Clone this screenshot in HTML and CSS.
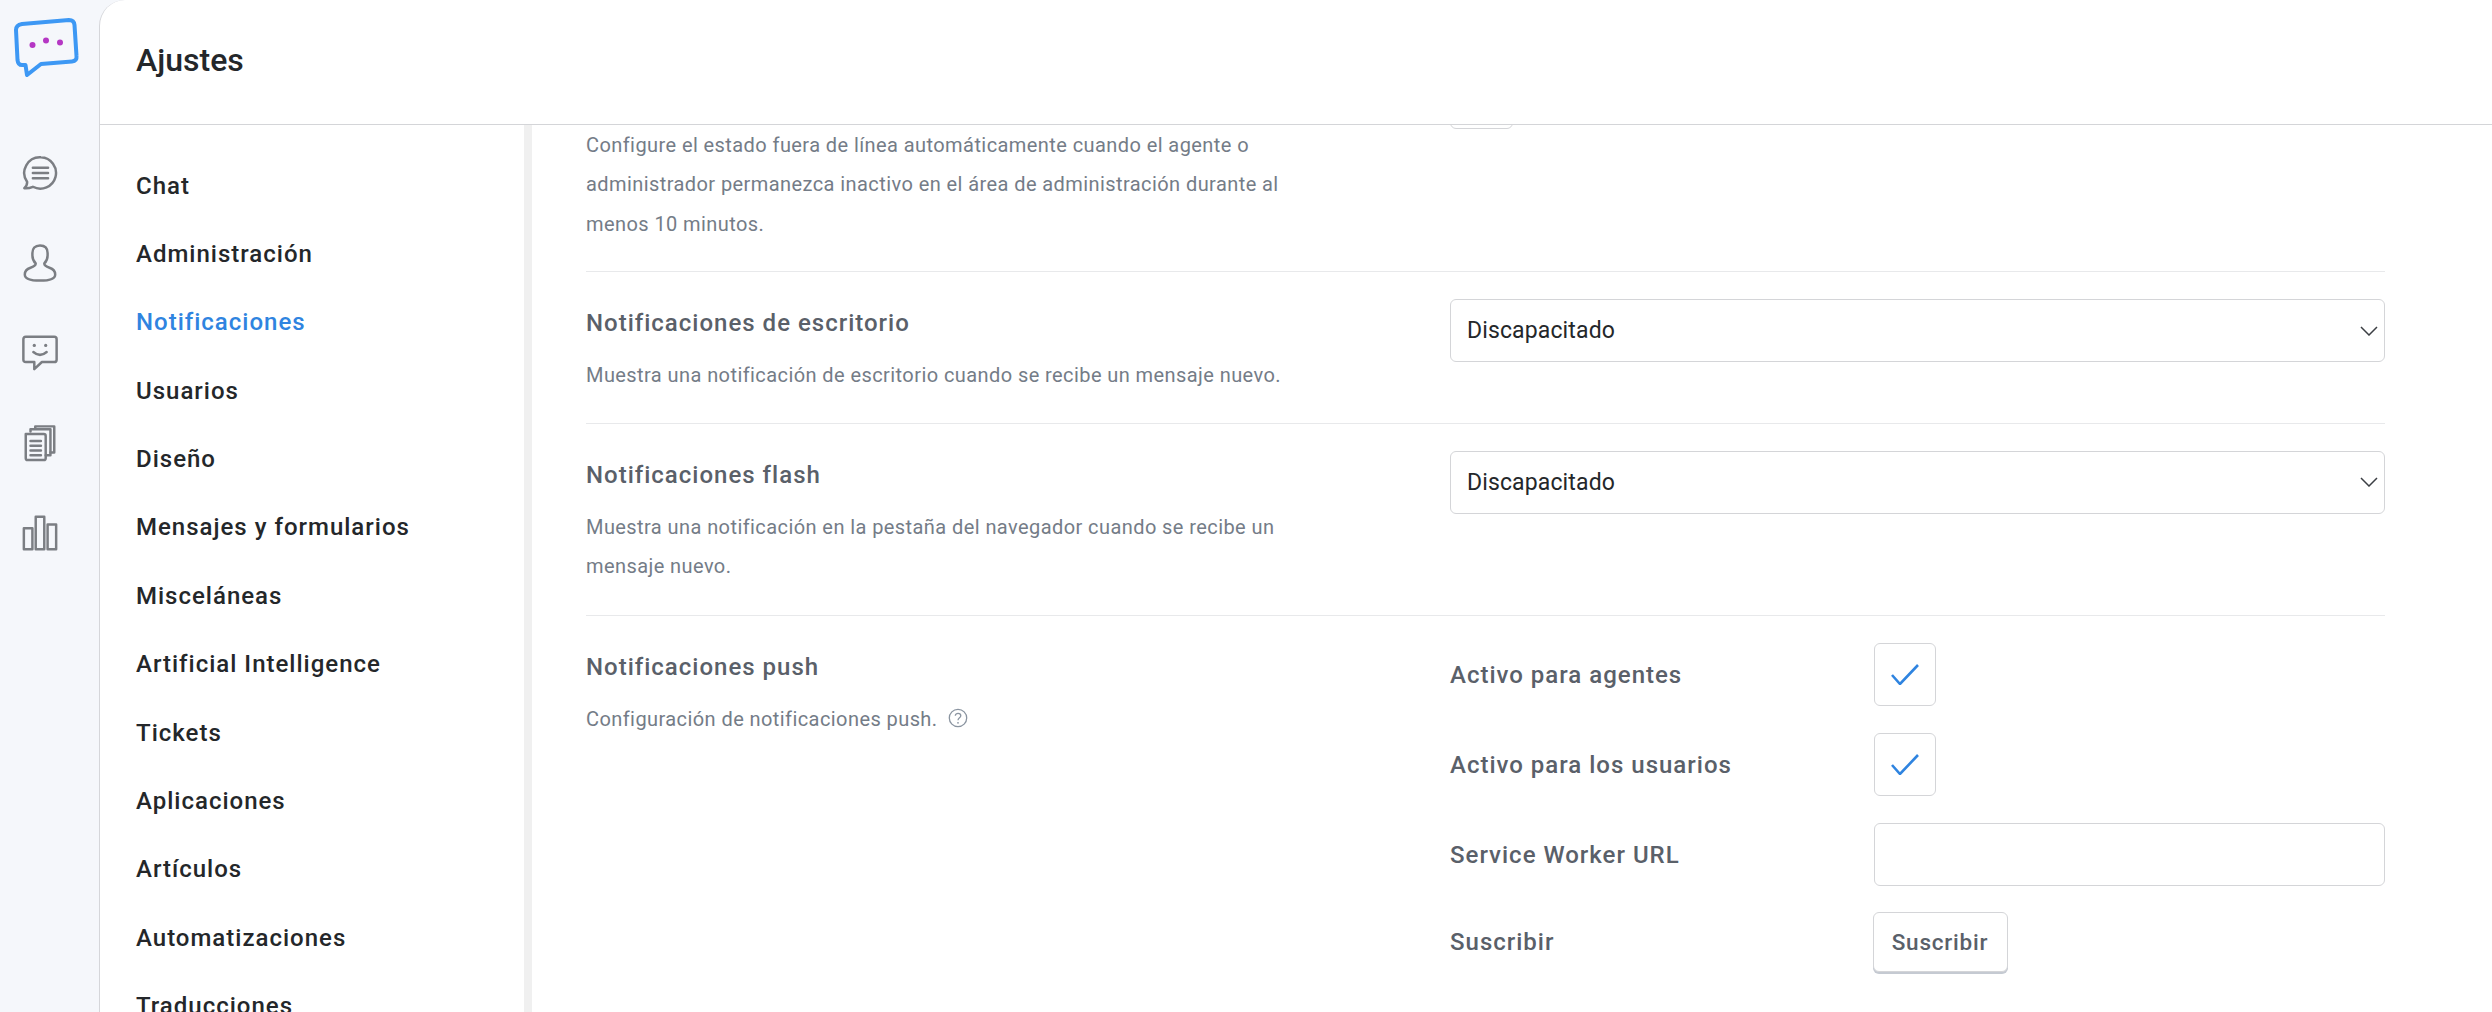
FILE: index.html
```html
<!DOCTYPE html>
<html lang="es">
<head>
<meta charset="utf-8">
<title>Ajustes</title>
<link rel="stylesheet" href="styles.css">
</head>
<body>
<div class="app">
  <aside class="rail">
    <svg class="logo" viewBox="0 0 92 88" width="92" height="88" aria-hidden="true">
      <path class="logo-bubble" d="M22 24 L69 20 Q74 20 74.500 25 L76.500 56 Q77 61 72 61.500 L41 64 L27 75 L25.500 65 L22 65 Q18 65 17.500 60 L16 30 Q16 25 22 24 Z"/>
      <circle class="logo-dot" cx="32.500" cy="45" r="3"/>
      <circle class="logo-dot" cx="46" cy="40.500" r="3"/>
      <circle class="logo-dot" cx="60" cy="42.500" r="3"/>
    </svg>
    <nav class="rail-nav">
      <a class="rail-item"><svg class="rail-icon" viewBox="0 0 40 40"><path d="M21 3.500 A16.500 16.500 0 1 1 12.500 34.500 Q8 36.500 3.500 36 Q6.500 33.500 6.500 29.500 A16.500 16.500 0 0 1 21 3.500 Z"/><path d="M12.500 14.500 H28.500 M12.500 20 H28.500 M12.500 25.500 H28.500"/></svg></a>
      <a class="rail-item"><svg class="rail-icon" viewBox="0 0 40 40"><path d="M20 1.500 C25.500 1.500 28 5 28 9.500 V12 C28 15.500 26.500 18.500 24.500 20.500 C24.500 23 27 24 30 25 C34.500 26.500 36 29 36 32 C36 36.500 30 38.500 20 38.500 C10 38.500 4 36.500 4 32 C4 29 5.500 26.500 10 25 C13 24 15.500 23 15.500 20.500 C13.500 18.500 12 15.500 12 12 V9.500 C12 5 14.500 1.500 20 1.500 Z"/></svg></a>
      <a class="rail-item"><svg class="rail-icon" viewBox="0 0 40 40"><path d="M5 3 H35 Q37.500 3 37.500 5.500 V27 Q37.500 29.500 35 29.500 H22 L14 37 V29.500 H5 Q2.500 29.500 2.500 27 V5.500 Q2.500 3 5 3 Z"/><path d="M13 19 Q20 25 27 19"/><circle class="icon-fill" cx="14" cy="12" r="1.700"/><circle class="icon-fill" cx="26" cy="12" r="1.700"/></svg></a>
      <a class="rail-item"><svg class="rail-icon" viewBox="0 0 40 40"><path d="M5 10.500 H24 Q26 10.500 26 12.500 V36 Q26 38 24 38 H7 Q5 38 5 36 Z"/><path d="M10 8 V5.500 H31 V33 H26"/><path d="M15 5 V2.500 H35 V30 H31"/><path d="M10 18 H21 M10 23 H21 M10 28 H21 M10 33 H21"/></svg></a>
      <a class="rail-item"><svg class="rail-icon" viewBox="0 0 40 40"><path d="M3 15 H12 V37 H3 Z"/><path d="M15.500 3 H24.500 V37 H15.500 Z"/><path d="M28 11 H37 V37 H28 Z"/></svg></a>
    </nav>
  </aside>
  <main class="main">
    <header class="header"><h1 class="page-title">Ajustes</h1></header>
    <div class="body">
      <nav class="side">
        <a class="side-link">Chat</a>
        <a class="side-link">Administración</a>
        <a class="side-link active">Notificaciones</a>
        <a class="side-link">Usuarios</a>
        <a class="side-link">Diseño</a>
        <a class="side-link">Mensajes y formularios</a>
        <a class="side-link">Misceláneas</a>
        <a class="side-link">Artificial Intelligence</a>
        <a class="side-link">Tickets</a>
        <a class="side-link">Aplicaciones</a>
        <a class="side-link">Artículos</a>
        <a class="side-link">Automatizaciones</a>
        <a class="side-link">Traducciones</a>
      </nav>
      <div class="side-scrollbar"></div>
      <section class="content">
        <div class="scroller">
          <div class="row row-first">
            <div class="info">
              <p class="desc">Configure el estado fuera de línea automáticamente cuando el agente o administrador permanezca inactivo en el área de administración durante al menos 10 minutos.</p>
            </div>
            <div class="control"><div class="box box-clipped"></div></div>
          </div>
          <div class="row">
            <div class="info">
              <h2 class="row-title">Notificaciones de escritorio</h2>
              <p class="desc">Muestra una notificación de escritorio cuando se recibe un mensaje nuevo.</p>
            </div>
            <div class="control">
              <div class="select"><span>Discapacitado</span><svg class="chevron" viewBox="0 0 18 10"><path d="M1 1 L9 9 L17 1"/></svg></div>
            </div>
          </div>
          <div class="row row-flash">
            <div class="info">
              <h2 class="row-title">Notificaciones flash</h2>
              <p class="desc">Muestra una notificación en la pestaña del navegador cuando se recibe un mensaje nuevo.</p>
            </div>
            <div class="control">
              <div class="select"><span>Discapacitado</span><svg class="chevron" viewBox="0 0 18 10"><path d="M1 1 L9 9 L17 1"/></svg></div>
            </div>
          </div>
          <div class="row row-last">
            <div class="info">
              <h2 class="row-title">Notificaciones push</h2>
              <p class="desc">Configuración de notificaciones push. <svg class="help" viewBox="0 0 20 20"><circle cx="10" cy="10" r="8.700"/><path d="M7.300 7.800 C7.300 4.500 12.800 4.500 12.800 7.800 C12.800 10 10 9.700 10 12.300"/><circle class="help-dot" cx="10" cy="14.800" r="0.900"/></svg></p>
            </div>
            <div class="control sub-grid">
              <div class="sub-row"><label class="sub-label">Activo para agentes</label><div class="box"><svg class="check" viewBox="0 0 28 21"><path d="M1 11 L9 20 L27 1"/></svg></div></div>
              <div class="sub-row"><label class="sub-label">Activo para los usuarios</label><div class="box"><svg class="check" viewBox="0 0 28 21"><path d="M1 11 L9 20 L27 1"/></svg></div></div>
              <div class="sub-row"><label class="sub-label">Service Worker URL</label><input class="text-input" type="text"></div>
              <div class="sub-row sub-row-action"><label class="sub-label">Suscribir</label><button class="btn" type="button">Suscribir</button></div>
            </div>
          </div>
        </div>
      </section>
    </div>
  </main>
</div>
</body>
</html>
```

FILE: styles.css
```css
* { box-sizing: border-box; }
html, body { margin: 0; height: 100%; overflow: hidden; }
body { font-family: Roboto, "Liberation Sans", sans-serif; background: #f5f7fb; }
.app { display: flex; height: 1012px; }

.rail { width: 99px; flex: none; display: flex; flex-direction: column; background: #f5f7fb; }
.logo { display: block; flex: none; margin-bottom: 40px; height: 88px; }
.logo-bubble { fill: none; stroke: #3d98f4; stroke-width: 4; stroke-linejoin: round; }
.logo-dot { fill: #b537c4; }
.rail-nav { display: flex; flex-direction: column; }
.rail-item { height: 90px; display: flex; align-items: center; justify-content: center; padding-right: 20px; }
.rail-icon { width: 38px; height: 38px; fill: none; stroke: #7b7e83; stroke-width: 2.600; stroke-linejoin: round; stroke-linecap: round; }
.icon-fill { fill: #7b7e83; stroke: none; }

.main { flex: 1; min-width: 0; display: flex; flex-direction: column; background: #fff; border-left: 1px solid #d5d6da; border-top-left-radius: 26px; overflow: hidden; }
.header { height: 125px; flex: none; border-bottom: 1px solid #d4d5d8; display: flex; align-items: center; padding-left: 36px; }
.page-title { margin: 0 0 4px; font-size: 32px; font-weight: 500; color: #24272a; }

.body { flex: 1; min-height: 0; display: flex; }
.side { width: 424px; flex: none; padding: 26.500px 0 0 36px; overflow: hidden; }
.side-link { display: block; height: 68.400px; line-height: 68.400px; font-size: 24px; font-weight: 500; letter-spacing: 1px; color: #24272a; white-space: nowrap; }
.side-link.active { color: #2f84e0; }
.side-scrollbar { width: 8px; flex: none; background: #f0f0f0; }

.content { flex: 1; min-width: 0; overflow: hidden; padding: 0 107px 0 54px; }
.scroller { margin-top: -26.500px; }
.row { display: flex; border-bottom: 1px solid #e8e9eb; padding: 27px 0; }
.row-flash { padding-bottom: 28px; }
.row-last { border-bottom: 0; }
.info { width: 864px; flex: none; padding-top: 8px; }
.row-first .info { padding-top: 0; }
.row-title { margin: 0 0 17px; font-size: 24px; line-height: 32px; font-weight: 500; letter-spacing: 1px; color: #5a6069; }
.desc { margin: 0; width: 700px; font-size: 20px; line-height: 39.600px; letter-spacing: 0.420px; color: #747c87; }
.control { flex: 1; min-width: 0; }
.select { height: 63px; border: 1px solid #d4d5d8; border-radius: 6px; display: flex; align-items: center; justify-content: space-between; padding: 0 6px 0 16px; font-size: 23px; letter-spacing: 0.130px; color: #24272a; }
.chevron { width: 18px; height: 10px; fill: none; stroke: #3c3f44; stroke-width: 1.500; }
.help { width: 20px; height: 20px; margin-left: 5px; vertical-align: -2px; fill: none; stroke: #8a94a0; stroke-width: 1.300; }
.help-dot { fill: #8a94a0; stroke: none; }

.box { width: 63px; height: 63px; border: 1px solid #d4d5d8; border-radius: 6px; display: flex; align-items: center; justify-content: center; }
.box-clipped { margin-top: -60px; }
.check { width: 28px; height: 21px; fill: none; stroke: #2f84e0; stroke-width: 2.600; }
.sub-grid { display: flex; flex-direction: column; gap: 27px; }
.sub-row { display: flex; align-items: center; height: 63px; }
.sub-row .box { width: 62.500px; }
.sub-row-action { height: 60px; margin-top: -1px; }
.sub-label { width: 423.500px; flex: none; font-size: 24px; font-weight: 500; letter-spacing: 1px; color: #5a6069; }
.text-input { flex: 1; min-width: 0; height: 63px; border: 1px solid #d4d5d8; border-radius: 6px; background: #fff; }
.btn { width: 135px; height: 60px; margin-left: -1px; padding: 0; background: #fff; border: 1px solid #d4d5d8; border-radius: 6px; box-shadow: 0 2px 0 #c5cad2; font: 500 22.500px Roboto, sans-serif; letter-spacing: 0.800px; color: #5a6069; }
```
